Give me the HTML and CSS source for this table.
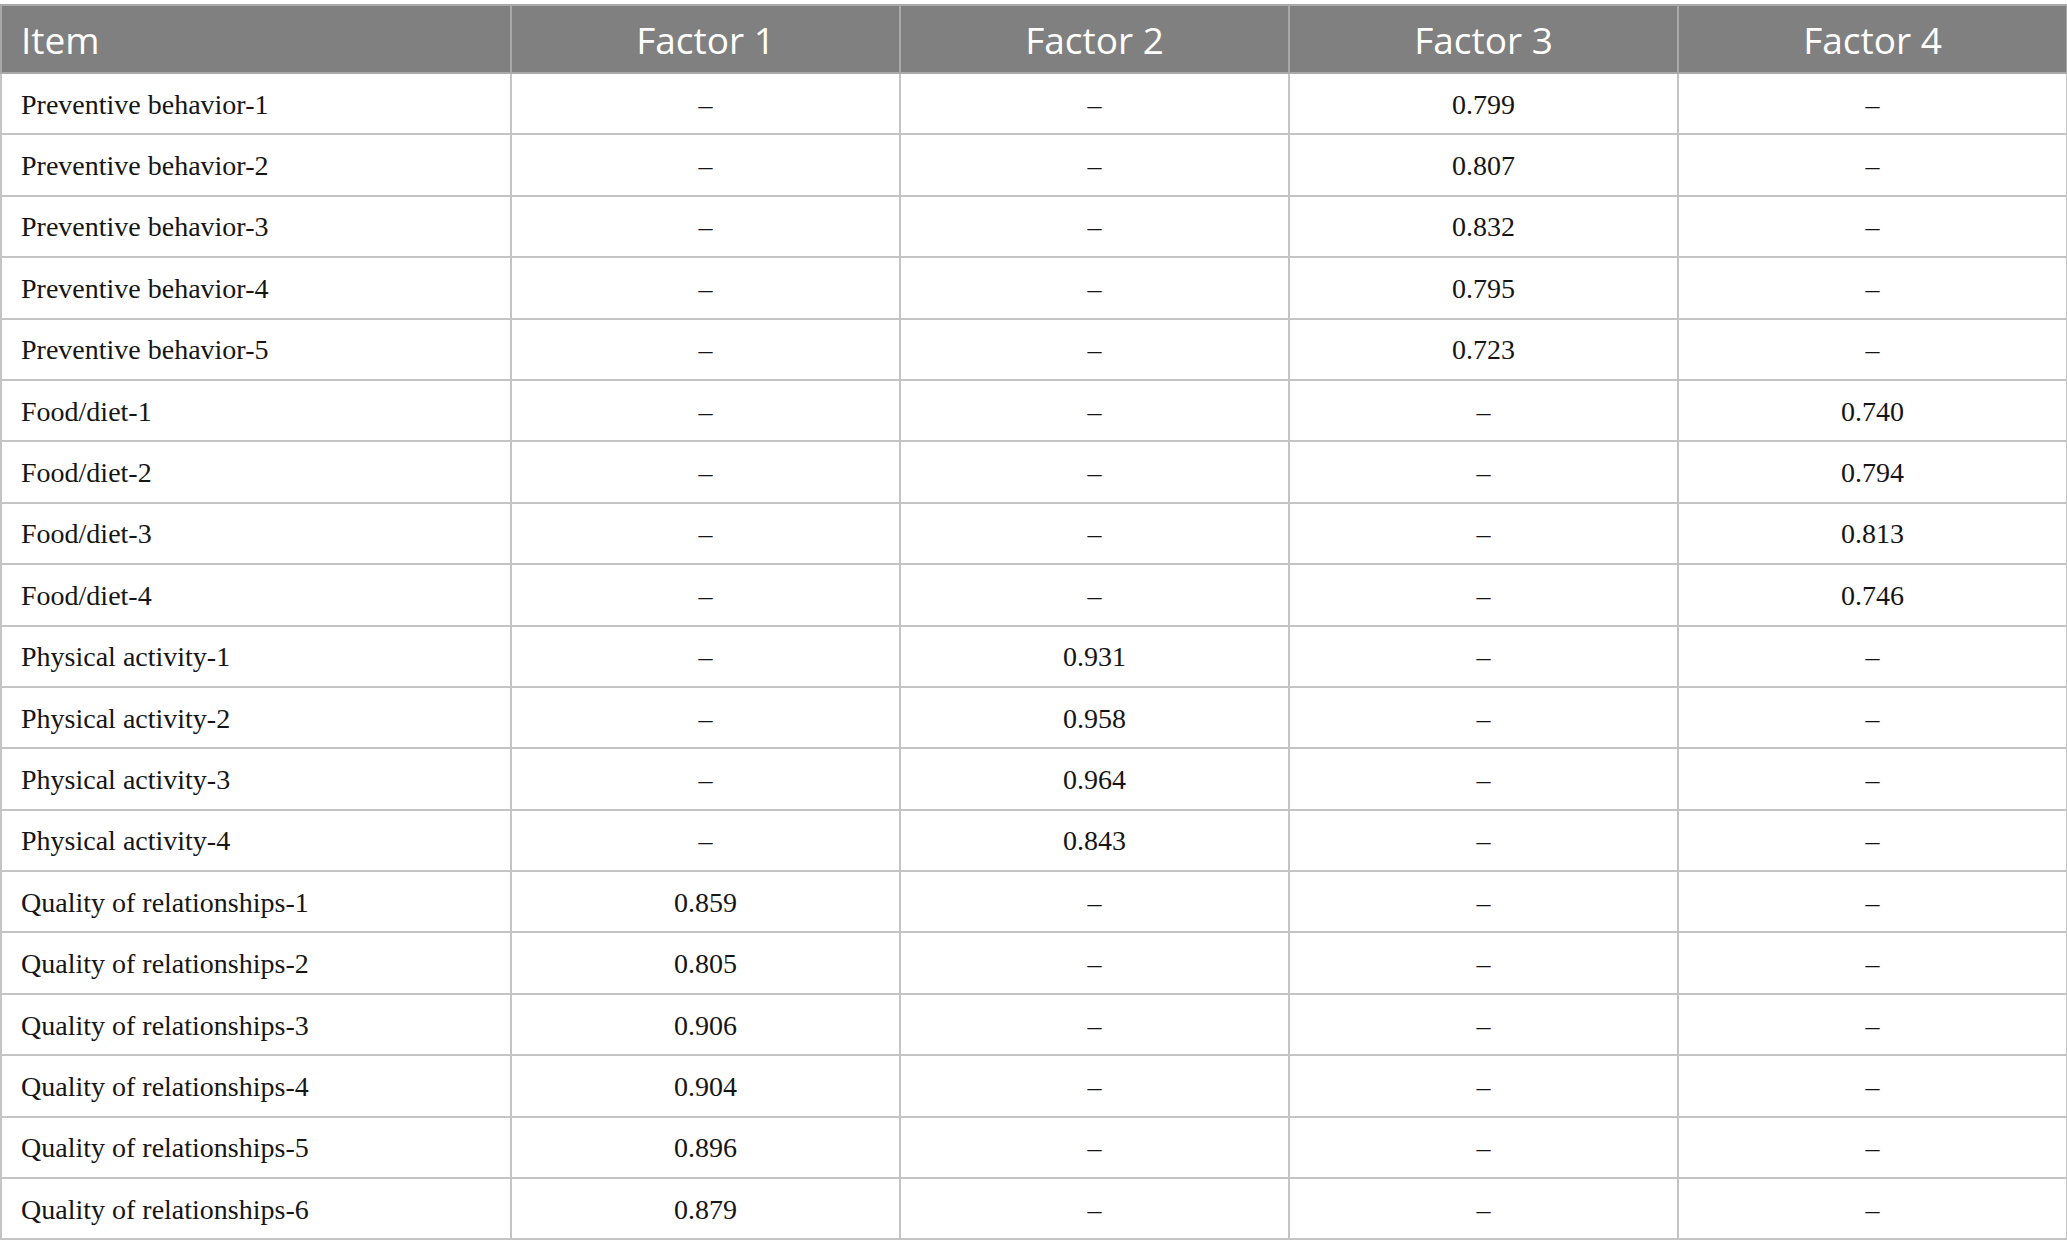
FILE: index.html
```html
<!DOCTYPE html>
<html>
<head>
<meta charset="utf-8">
<link rel="stylesheet" href="styles.css">
</head>
<body>
<table class="tbl">
<colgroup><col class="c-item"><col class="c-f"><col class="c-f"><col class="c-f"><col class="c-f"></colgroup>
<thead>
<tr><th class="left">Item</th><th>Factor 1</th><th>Factor 2</th><th>Factor 3</th><th>Factor 4</th></tr>
</thead>
<tbody>
<tr><td class="left">Preventive behavior-1</td><td>–</td><td>–</td><td>0.799</td><td>–</td></tr>
<tr><td class="left">Preventive behavior-2</td><td>–</td><td>–</td><td>0.807</td><td>–</td></tr>
<tr><td class="left">Preventive behavior-3</td><td>–</td><td>–</td><td>0.832</td><td>–</td></tr>
<tr><td class="left">Preventive behavior-4</td><td>–</td><td>–</td><td>0.795</td><td>–</td></tr>
<tr><td class="left">Preventive behavior-5</td><td>–</td><td>–</td><td>0.723</td><td>–</td></tr>
<tr><td class="left">Food/diet-1</td><td>–</td><td>–</td><td>–</td><td>0.740</td></tr>
<tr><td class="left">Food/diet-2</td><td>–</td><td>–</td><td>–</td><td>0.794</td></tr>
<tr><td class="left">Food/diet-3</td><td>–</td><td>–</td><td>–</td><td>0.813</td></tr>
<tr><td class="left">Food/diet-4</td><td>–</td><td>–</td><td>–</td><td>0.746</td></tr>
<tr><td class="left">Physical activity-1</td><td>–</td><td>0.931</td><td>–</td><td>–</td></tr>
<tr><td class="left">Physical activity-2</td><td>–</td><td>0.958</td><td>–</td><td>–</td></tr>
<tr><td class="left">Physical activity-3</td><td>–</td><td>0.964</td><td>–</td><td>–</td></tr>
<tr><td class="left">Physical activity-4</td><td>–</td><td>0.843</td><td>–</td><td>–</td></tr>
<tr><td class="left">Quality of relationships-1</td><td>0.859</td><td>–</td><td>–</td><td>–</td></tr>
<tr><td class="left">Quality of relationships-2</td><td>0.805</td><td>–</td><td>–</td><td>–</td></tr>
<tr><td class="left">Quality of relationships-3</td><td>0.906</td><td>–</td><td>–</td><td>–</td></tr>
<tr><td class="left">Quality of relationships-4</td><td>0.904</td><td>–</td><td>–</td><td>–</td></tr>
<tr><td class="left">Quality of relationships-5</td><td>0.896</td><td>–</td><td>–</td><td>–</td></tr>
<tr><td class="left">Quality of relationships-6</td><td>0.879</td><td>–</td><td>–</td><td>–</td></tr>
</tbody>
</table>
</body>
</html>
```
FILE: styles.css
```css
html, body {
  margin: 0;
  padding: 0;
  background: #ffffff;
}
body {
  padding-top: 4px;
}
.tbl {
  border-collapse: collapse;
  table-layout: fixed;
  width: 2067px;
}
.c-item { width: 510px; }
.c-f { width: 389px; }
.tbl th, .tbl td {
  border: 2px solid #c4c4c4;
  padding: 0;
  text-align: center;
  vertical-align: middle;
}
.tbl th {
  background: #808080;
  color: #ffffff;
  font-family: "Open Sans", "Noto Sans", sans-serif;
  font-weight: 400;
  font-size: 37px;
  height: 66px;
  border-color: #a9a9a9;
}
.tbl td {
  font-family: "Liberation Serif", "Times New Roman", serif;
  font-size: 28px;
  line-height: 32px;
  color: #151515;
  height: 57.4px;
  padding-top: 2px;
}
.tbl .left {
  text-align: left;
  padding-left: 19px;
}
```
